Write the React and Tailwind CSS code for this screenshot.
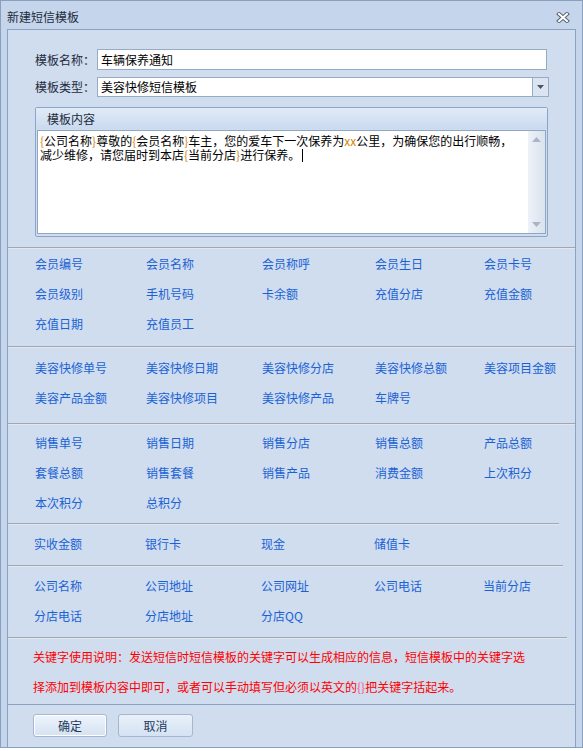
import React from "react";

const sections = [
  {
    pt: "pt-0",
    pb: "pb-[7px]",
    pl: "pl-[27px]",
    rows: [
      ["会员编号", "会员名称", "会员称呼", "会员生日", "会员卡号"],
      ["会员级别", "手机号码", "卡余额", "充值分店", "充值金额"],
      ["充值日期", "充值员工"],
    ],
  },
  {
    pt: "pt-[5px]",
    pb: "pb-[10px]",
    pl: "pl-[27px]",
    rows: [
      ["美容快修单号", "美容快修日期", "美容快修分店", "美容快修总额", "美容项目金额"],
      ["美容产品金额", "美容快修项目", "美容快修产品", "车牌号"],
    ],
  },
  {
    pt: "pt-[3px]",
    pb: "pb-[5px]",
    pl: "pl-[27px]",
    rows: [
      ["销售单号", "销售日期", "销售分店", "销售总额", "产品总额"],
      ["套餐总额", "销售套餐", "销售产品", "消费金额", "上次积分"],
      ["本次积分", "总积分"],
    ],
  },
  {
    pt: "pt-[4px]",
    pb: "pb-[6px]",
    pl: "pl-[26px]",
    rows: [["实收金额", "银行卡", "现金", "储值卡"]],
  },
  {
    pt: "pt-[4px]",
    pb: "pb-[6px]",
    pl: "pl-[26px]",
    rows: [
      ["公司名称", "公司地址", "公司网址", "公司电话", "当前分店"],
      ["分店电话", "分店地址", "分店QQ"],
    ],
  },
];

// separator widths after each block (the groups differ slightly)
const sepWidths = ["w-full", "w-full", "w-full", "w-[551px]", "w-[555px]", "w-[559px]"];
const colWidths = ["w-[111px]", "w-[116px]", "w-[113px]", "w-[109px]", "w-[80px]"];

const Separator = ({ width }) => (
  <div className={`h-[2px] border-t border-[#a4a8ae] border-b border-b-[#dfe7f2] ${width}`} />
);

const Brace = ({ children }) => <span className="text-[#d4870c]">{children}</span>;

const App = () => {
  return (
    <div className="w-[583px] h-[751px] bg-white font-['Noto_Sans_CJK_SC',sans-serif] text-[12px] leading-[12px]">
      <div className="h-[748px] flex flex-col border border-[#8a9fbb] bg-[#c5d6ec]">
        {/* title bar */}
        <div className="h-[28px] pt-[4px] pl-[6px] pr-[12px] flex items-center justify-between">
          <span className="text-[#1e2b3c]">新建短信模板</span>
          <svg width="14" height="11" viewBox="0 0 14 11">
            <path d="M3 2 L11 9 M11 2 L3 9" stroke="#5a6472" strokeWidth="4" strokeLinecap="square" />
            <path d="M3 2 L11 9 M11 2 L3 9" stroke="#ffffff" strokeWidth="2" strokeLinecap="square" />
          </svg>
        </div>

        {/* main panel */}
        <div className="flex-1 ml-[6px] w-[569px] flex flex-col border-x border-t border-[#8ca2c2] bg-[#d0ddef]">
          <div className="pt-[19px] pl-[27px]">
            <div className="flex items-center h-[21px]">
              <span className="w-[62px] text-[#1e2b3c]">模板名称：</span>
              <div className="w-[450px] h-[21px] border border-[#98abc6] bg-white flex items-center pl-[3px] text-black">
                车辆保养通知
              </div>
            </div>
            <div className="flex items-center h-[20px] mt-[7px]">
              <span className="w-[62px] text-[#1e2b3c]">模板类型：</span>
              <div className="w-[452px] h-[20px] border border-[#98abc6] bg-white flex items-center text-black">
                <span className="flex-1 pl-[3px]">美容快修短信模板</span>
                <div className="w-[16px] h-full border-l border-[#98abc6] bg-[#dbe5f2] flex items-center justify-center">
                  <svg width="7" height="4" viewBox="0 0 7 4">
                    <path d="M0 0 H7 L3.5 4 Z" fill="#4b5566" />
                  </svg>
                </div>
              </div>
            </div>

            {/* group box */}
            <div className="mt-[10px] w-[513px] h-[130px] border border-[#8ca5c6] rounded-[2px] flex flex-col">
              <div className="h-[21px] pl-[11px] flex items-center bg-gradient-to-b from-[#e2ebf7] to-[#c9daef] text-[#1e2b3c]">
                模板内容
              </div>
              <div className="ml-[1px] mt-[1px] w-[509px] h-[104px] border border-[#8fa6c4] bg-white flex">
                <div className="flex-1 pl-[2px] pt-[3px] text-black leading-[14px]">
                  <div>
                    <Brace>{"{"}</Brace>公司名称<Brace>{"}"}</Brace>尊敬的<Brace>{"{"}</Brace>会员名称
                    <Brace>{"}"}</Brace>车主，您的爱车下一次保养为<Brace>xx</Brace>公里，为确保您的出行顺畅，
                  </div>
                  <div className="flex items-center">
                    <span>
                      减少维修，请您届时到本店<Brace>{"{"}</Brace>当前分店<Brace>{"}"}</Brace>进行保养。
                    </span>
                    <span className="ml-[2px] w-[1px] h-[13px] bg-black" />
                  </div>
                </div>
                <div className="w-[17px] h-full bg-gradient-to-r from-[#eef2f8] to-[#d9e2ee] flex flex-col items-center justify-between py-[6px]">
                  <svg width="9" height="5" viewBox="0 0 9 5">
                    <path d="M0 5 L4.5 0 L9 5 Z" fill="#a9b5c6" />
                  </svg>
                  <svg width="9" height="5" viewBox="0 0 9 5">
                    <path d="M0 0 H9 L4.5 5 Z" fill="#a9b5c6" />
                  </svg>
                </div>
              </div>
            </div>
          </div>

          <div className="mt-[10px]">
            <Separator width={sepWidths[0]} />
          </div>

          {sections.map((sec, si) => (
            <div key={si}>
              <div className={`${sec.pt} ${sec.pb} ${sec.pl}`}>
                {sec.rows.map((row, ri) => (
                  <div key={ri} className="h-[30px] flex items-center">
                    {row.map((item, ci) => (
                      <span key={item} className={`${colWidths[ci]} shrink-0 text-[#1a62d4] whitespace-nowrap`}>
                        {item}
                      </span>
                    ))}
                  </div>
                ))}
              </div>
              <Separator width={sepWidths[si + 1]} />
            </div>
          ))}

          {/* keyword help */}
          <div className="pt-[3px] pb-[2px] pl-[25px] text-[#ff0000]">
            <div className="h-[30px] flex items-center whitespace-nowrap">
              关键字使用说明：发送短信时短信模板的关键字可以生成相应的信息，短信模板中的关键字选
            </div>
            <div className="h-[30px] flex items-center whitespace-nowrap">
              择添加到模板内容中即可，或者可以手动填写但必须以英文的<span className="text-[#ff4f8a]">{"{}"}</span>
              把关键字括起来。
            </div>
          </div>

          {/* buttons */}
          <div className="flex-1 border-t border-[#8ca2c2] pt-[9px] pl-[25px] flex gap-[11px]">
            <button
              type="button"
              className="w-[74px] h-[23px] rounded-[3px] border border-[#a5b7cf] bg-gradient-to-b from-[#eef4fb] to-[#d5e2f3] shadow-[inset_0_0_0_1px_#ffffff] text-[#1f3a5f]"
            >
              确定
            </button>
            <button
              type="button"
              className="w-[75px] h-[23px] rounded-[3px] border border-[#a5b7cf] bg-gradient-to-b from-[#e9f0f9] to-[#d5e2f3] text-[#1f3a5f]"
            >
              取消
            </button>
          </div>
        </div>
      </div>
    </div>
  );
};

export default App;
